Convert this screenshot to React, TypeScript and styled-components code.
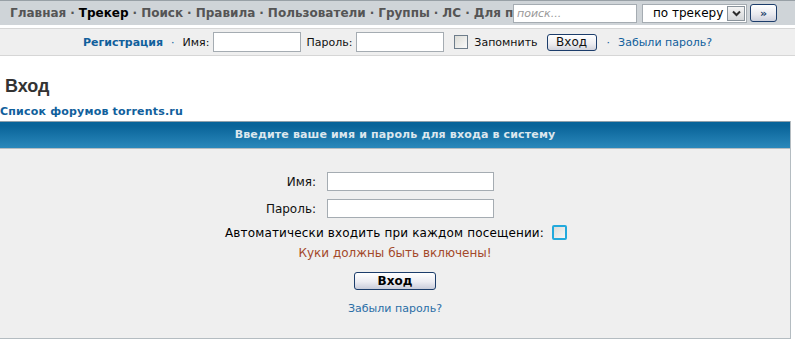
import React from "react";
import styled, { createGlobalStyle } from "styled-components";

const GlobalStyle = createGlobalStyle`
  body {
    margin: 0;
    background: #fff;
    font-family: "DejaVu Sans", Verdana, sans-serif;
    color: #000;
  }
`;

const TopNav = styled.div`
  display: flex;
  align-items: center;
  height: 24px;
  background: #cfd4d8;
  border-top: 1px solid #98a0a6;
`;

const NavLinks = styled.div`
  flex: 1;
  min-width: 0;
  overflow: hidden;
  white-space: nowrap;
  padding-left: 10px;
  font-size: 12px;
  font-weight: bold;
  color: #555;
`;

const NavLink = styled.a<{ $active?: boolean }>`
  color: ${(p) => (p.$active ? "#000" : "#555")};
  text-decoration: none;
`;

const Dot = styled.span`
  padding: 0 4px;
`;

const SearchForm = styled.div`
  display: flex;
  align-items: center;
  padding-right: 18px;
`;

const SearchInput = styled.div`
  box-sizing: border-box;
  width: 124px;
  height: 19px;
  border: 1px solid #a5acb2;
  background: #fff;
  font-size: 11px;
  font-style: italic;
  color: #999;
  line-height: 17px;
  padding-left: 3px;
`;

const Select = styled.div`
  box-sizing: border-box;
  display: flex;
  align-items: center;
  justify-content: space-between;
  width: 105px;
  height: 19px;
  margin-left: 5px;
  border: 1px solid #a5acb2;
  background: #fff;
  font-size: 12px;
  padding-left: 10px;
  padding-right: 1px;
`;

const SelectArrow = styled.span`
  box-sizing: border-box;
  display: flex;
  align-items: center;
  justify-content: center;
  width: 18px;
  height: 15px;
  border: 1px solid #8a939b;
  background: linear-gradient(#f4f4f4, #d4d6d8);
`;

const GoButton = styled.div`
  box-sizing: border-box;
  display: flex;
  align-items: center;
  justify-content: center;
  width: 27px;
  height: 18px;
  margin-left: 3px;
  border: 1px solid #1c3d6b;
  border-radius: 3px;
  background: linear-gradient(#ffffff, #e8e8ee 60%, #cdd0dc);
  font-size: 11px;
  font-weight: bold;
  color: #1c3d6b;
`;

const LoginBar = styled.div`
  display: flex;
  align-items: center;
  justify-content: center;
  height: 26px;
  margin-top: 3px;
  background: #efefef;
  border-top: 1px solid #d6d6d6;
  border-bottom: 1px solid #d6d6d6;
  font-size: 11px;
  color: #111;
  white-space: nowrap;
`;

const BarLink = styled.a<{ $bold?: boolean }>`
  color: #11609c;
  text-decoration: none;
  font-weight: ${(p) => (p.$bold ? "bold" : "normal")};
`;

const BarDot = styled.span`
  color: #11609c;
  padding: 0 8px;
`;

const BarLabel = styled.span`
  margin-right: 4px;
`;

const BarInput = styled.div`
  box-sizing: border-box;
  width: 88px;
  height: 20px;
  border: 1px solid #a5acb2;
  background: #fff;
  margin-right: 5px;
`;

const XpCheck = styled.span`
  box-sizing: border-box;
  display: inline-block;
  width: 14px;
  height: 14px;
  margin-left: 5px;
  margin-right: 6px;
  border: 1px solid #6e7d8b;
  background: linear-gradient(135deg, #dcdcd6, #fafafa);
`;

const SmallButton = styled.div`
  box-sizing: border-box;
  width: 50px;
  height: 17px;
  margin-left: 9px;
  margin-right: 2px;
  border: 1px solid #1c3d6b;
  border-radius: 3px;
  background: linear-gradient(#ffffff, #ececf0 60%, #d0d2dc);
  font-size: 12px;
  line-height: 15px;
  text-align: center;
`;

const PageTitle = styled.h1`
  margin: 0;
  padding: 20px 0 0 5px;
  height: 25px;
  font-family: "Liberation Sans", Arial, sans-serif;
  font-size: 18px;
  font-weight: bold;
  color: #333;
`;

const Crumb = styled.a`
  display: block;
  padding-top: 4px;
  height: 16px;
  font-size: 11px;
  font-weight: bold;
  letter-spacing: 0.2px;
  color: #11609c;
  text-decoration: none;
`;

const Frame = styled.div`
  width: 790px;
  border-right: 1px solid #b4bcc1;
  border-bottom: 1px solid #b4bcc1;
  background: #efefef;
`;

const FrameHead = styled.div`
  height: 26px;
  border-top: 1px solid #8fa0ab;
  border-bottom: 1px solid #b4bcc1;
  background: linear-gradient(#07649a, #0a6499 15%, #2a88bb);
  color: #dce7ee;
  font-size: 11px;
  font-weight: bold;
  letter-spacing: 0.15px;
  line-height: 26px;
  text-align: center;
`;

const FrameBody = styled.div`
  display: flex;
  flex-direction: column;
  align-items: center;
  padding: 23px 0 23px;
  font-size: 12px;
`;

const FieldGrid = styled.div`
  display: grid;
  grid-template-columns: 40% 60%;
  row-gap: 8px;
  align-self: stretch;
  align-items: center;
`;

const FieldLabel = styled.label`
  text-align: right;
  color: #111;
`;

const FieldInput = styled.div`
  box-sizing: border-box;
  width: 167px;
  height: 19px;
  margin-left: 11px;
  border: 1px solid #a5acb2;
  background: #fff;
`;

const AutoRow = styled.div`
  display: flex;
  align-items: center;
  margin-top: 7px;
  height: 15px;
  padding-left: 2px;
  letter-spacing: 0.15px;
`;

const FocusCheck = styled.span`
  box-sizing: border-box;
  display: inline-block;
  width: 15px;
  height: 15px;
  margin-left: 8px;
  border: 2px solid #22a9dc;
  border-radius: 2px;
  background: linear-gradient(135deg, #dcdcd8, #f6f6f6);
`;

const CookieNote = styled.div`
  margin-top: 6px;
  line-height: 14px;
  color: #a3482a;
`;

const BigButton = styled.div`
  box-sizing: border-box;
  width: 82px;
  height: 18px;
  margin-top: 12px;
  border: 1px solid #1c3d6b;
  border-radius: 3px;
  background: linear-gradient(#ffffff, #ececf2 55%, #c9ccda);
  font-size: 12px;
  font-weight: bold;
  line-height: 16px;
  text-align: center;
`;

const ForgotLink = styled.a`
  margin-top: 12px;
  line-height: 13px;
  font-size: 11px;
  color: #2a6ea6;
  text-decoration: none;
`;

const navItems = [
  "Главная",
  "Трекер",
  "Поиск",
  "Правила",
  "Пользователи",
  "Группы",
  "ЛС",
  "Для правообладателей",
];

export default function App() {
  return (
    <>
      <GlobalStyle />
      <TopNav>
        <NavLinks>
          {navItems.map((item, i) => (
            <React.Fragment key={item}>
              {i > 0 && <Dot>·</Dot>}
              <NavLink $active={item === "Трекер"}>{item}</NavLink>
            </React.Fragment>
          ))}
        </NavLinks>
        <SearchForm>
          <SearchInput>поиск...</SearchInput>
          <Select>
            <span>по трекеру</span>
            <SelectArrow>
              <svg width="9" height="7" viewBox="0 0 9 7">
                <path d="M1 1.5 L4.5 5 L8 1.5" fill="none" stroke="#2b2b2b" strokeWidth="2" />
              </svg>
            </SelectArrow>
          </Select>
          <GoButton>»</GoButton>
        </SearchForm>
      </TopNav>

      <LoginBar>
        <BarLink $bold>Регистрация</BarLink>
        <BarDot>·</BarDot>
        <BarLabel>Имя:</BarLabel>
        <BarInput />
        <BarLabel>Пароль:</BarLabel>
        <BarInput />
        <XpCheck />
        <span>Запомнить</span>
        <SmallButton>Вход</SmallButton>
        <BarDot>·</BarDot>
        <BarLink>Забыли пароль?</BarLink>
      </LoginBar>

      <PageTitle>Вход</PageTitle>
      <Crumb>Список форумов torrents.ru</Crumb>

      <Frame>
        <FrameHead>Введите ваше имя и пароль для входа в систему</FrameHead>
        <FrameBody>
          <FieldGrid>
            <FieldLabel>Имя:</FieldLabel>
            <FieldInput />
            <FieldLabel>Пароль:</FieldLabel>
            <FieldInput />
          </FieldGrid>
          <AutoRow>
            <span>Автоматически входить при каждом посещении:</span>
            <FocusCheck />
          </AutoRow>
          <CookieNote>Куки должны быть включены!</CookieNote>
          <BigButton>Вход</BigButton>
          <ForgotLink>Забыли пароль?</ForgotLink>
        </FrameBody>
      </Frame>
    </>
  );
}
